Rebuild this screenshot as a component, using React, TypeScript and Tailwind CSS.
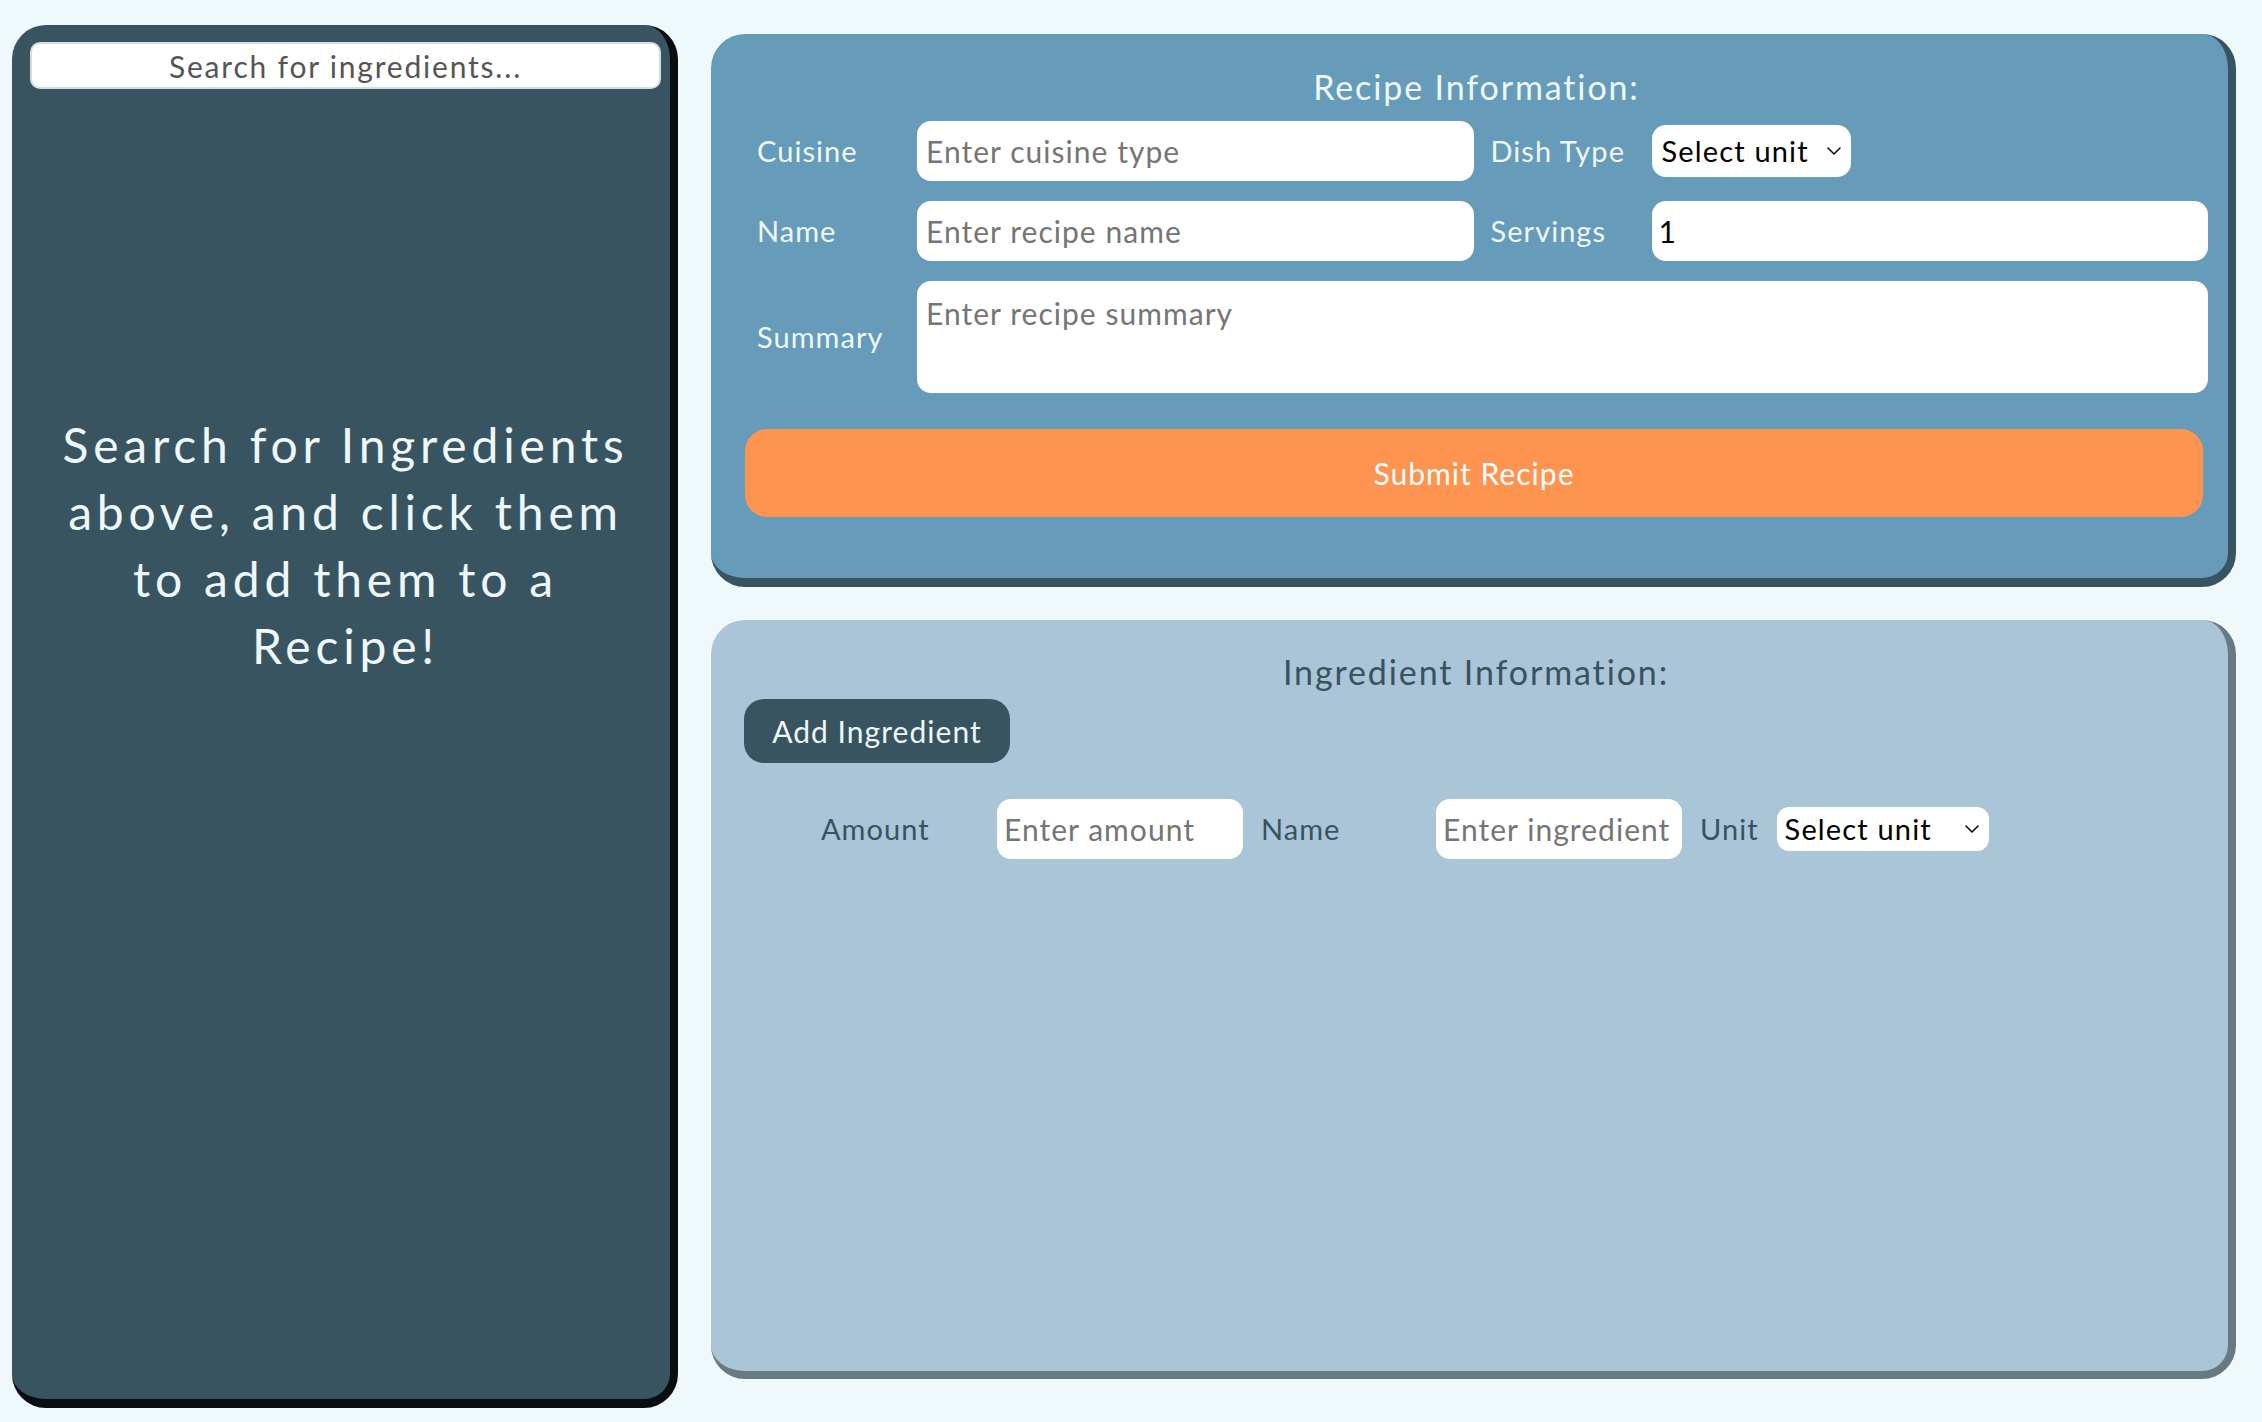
import { useState } from "react";

function Chevron() {
  return (
    <svg width="14" height="9" viewBox="0 0 14 9" fill="none" className="pointer-events-none absolute right-[10px] top-1/2 -translate-y-1/2">
      <path d="M1 1.5 7 7.5 13 1.5" stroke="#111" strokeWidth="1.6" strokeLinecap="round" strokeLinejoin="round" />
    </svg>
  );
}

export default function App() {
  const [servings, setServings] = useState("1");

  return (
    <div className="flex min-h-screen bg-[#eff8fa] pl-[12px] pt-[25px] font-['Lato',sans-serif] tracking-[0.065em]">
      {/* Left: ingredient search */}
      <aside className="flex h-[1383px] w-[666px] flex-col rounded-[34px] border-r-8 border-b-[9px] border-[#0a0e10] bg-[#385461] pt-[17px] pl-[18px] pr-[9px]">
        <input
          placeholder="Search for ingredients..."
          className="h-[47px] w-full rounded-[10px] border-2 border-[#d5dde3] bg-white text-center text-[30px] tracking-[0.06em] text-[#444] placeholder:text-[#555] outline-none"
        />
        <p className="mt-[322px] px-[10px] text-center text-[48px] leading-[67px] tracking-[0.1em] text-[#eef8fa]">
          Search for Ingredients above, and click them to add them to a Recipe!
        </p>
      </aside>

      {/* Right column */}
      <main className="ml-[33px] mt-[9px] flex w-[1525px] flex-col gap-[33px]">
        {/* Recipe info */}
        <section className="flex h-[553px] flex-col rounded-[34px] border-r-8 border-b-[9px] border-[#385461] bg-[#669cb9] pl-[34px] pr-[20px] pt-[33px]">
          <h2 className="text-center text-[34px] leading-[40px] tracking-[0.055em] text-[#eef8fa]">Recipe Information:</h2>
          <div className="mt-[14px] grid grid-cols-[143px_1fr_144px_1fr] items-center gap-x-[17px] gap-y-[20px] pl-[12px] text-[29px] text-[#eef8fa]">
            <label>Cuisine</label>
            <input
              placeholder="Enter cuisine type"
              className="h-[60px] rounded-[14px] bg-white px-[9px] text-[30px] text-black placeholder:text-[#757575] outline-none"
            />
            <label>Dish Type</label>
            <div className="relative justify-self-start">
              <select className="h-[52px] w-[199px] appearance-none rounded-[14px] bg-white pl-[10px] pr-[30px] text-[29px] tracking-[0.04em] text-black outline-none">
                <option>Select unit</option>
              </select>
              <Chevron />
            </div>

            <label>Name</label>
            <input
              placeholder="Enter recipe name"
              className="h-[60px] rounded-[14px] bg-white px-[9px] text-[30px] text-black placeholder:text-[#757575] outline-none"
            />
            <label>Servings</label>
            <input
              value={servings}
              onChange={(e) => setServings(e.target.value)}
              className="h-[60px] rounded-[14px] bg-white px-[7px] text-[30px] text-black outline-none"
            />

            <label>Summary</label>
            <textarea
              placeholder="Enter recipe summary"
              className="col-span-3 h-[112px] resize-none rounded-[14px] bg-white px-[9px] pt-[10px] text-[30px] text-black placeholder:text-[#757575] outline-none"
            />
          </div>
          <button className="mt-[36px] mr-[5px] h-[88px] rounded-[22px] bg-[#ff9350] text-[30px] text-white">
            Submit Recipe
          </button>
        </section>

        {/* Ingredient info */}
        <section className="flex h-[759px] flex-col rounded-[34px] border-r-8 border-b-8 border-[#677983] bg-[#aac5d7] pl-[33px] pr-[20px] pt-[32px]">
          <h2 className="text-center text-[34px] leading-[40px] tracking-[0.055em] text-[#37535f]">Ingredient Information:</h2>
          <div className="mt-[7px]">
            <button className="h-[64px] w-[266px] rounded-[20px] bg-[#385461] text-[30px] text-[#eef8fa]">
              Add Ingredient
            </button>
          </div>
          <div className="mt-[36px] flex items-center gap-[18px] pl-[77px] text-[29px] text-[#37535f]">
            <label className="w-[158px]">Amount</label>
            <input
              placeholder="Enter amount"
              className="h-[60px] w-[246px] rounded-[14px] bg-white px-[7px] text-[30px] text-black placeholder:text-[#757575] outline-none"
            />
            <label className="w-[157px]">Name</label>
            <input
              placeholder="Enter ingredient"
              className="h-[60px] w-[246px] rounded-[14px] bg-white px-[7px] text-[30px] text-black placeholder:text-[#757575] outline-none"
            />
            <label>Unit</label>
            <div className="relative">
              <select className="h-[44px] w-[212px] appearance-none rounded-[12px] bg-white pl-[8px] pr-[30px] text-[29px] tracking-[0.04em] text-black outline-none">
                <option>Select unit</option>
              </select>
              <Chevron />
            </div>
          </div>
        </section>
      </main>
    </div>
  );
}
